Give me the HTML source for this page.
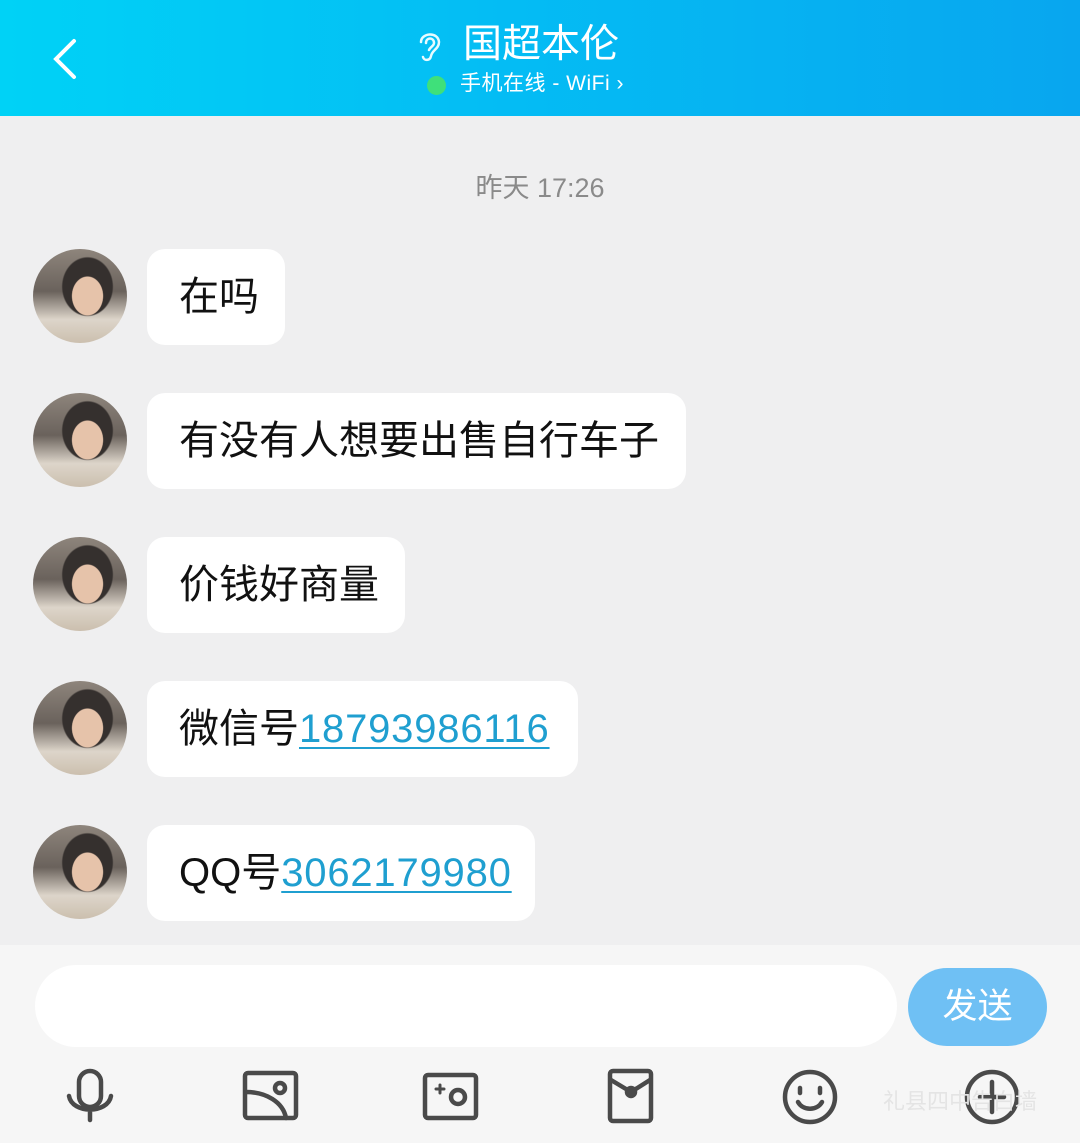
<!DOCTYPE html>
<html><head><meta charset="utf-8"><style>
*{margin:0;padding:0;box-sizing:border-box}
body{width:1080px;height:1143px;background:#efeff0;font-family:"Liberation Sans","Noto Sans CJK SC",sans-serif;position:relative;overflow:hidden}
.hdr{position:absolute;left:0;top:0;width:1080px;height:116px;background:linear-gradient(90deg,#00d2f6 0%,#04bdf4 45%,#08a6ef 100%)}
.title{position:absolute;left:463px;top:20px;font-size:39px;color:#fff;line-height:50px}
.sub{position:absolute;left:460px;top:70px;font-size:21px;color:#fff;line-height:28px;letter-spacing:0.5px}
.dot{position:absolute;left:427px;top:76px;width:19px;height:19px;border-radius:50%;background:#3fe07a}
.time{position:absolute;left:0;width:1080px;top:166px;text-align:center;font-size:27px;color:#8a8a8a}
.av{position:absolute;left:33px;width:94px;height:94px;border-radius:50%;background:radial-gradient(ellipse 16px 20px at 58% 50%,#e6c3aa 0 95%,transparent 100%),radial-gradient(ellipse 26px 30px at 58% 40%,#35302e 0 95%,transparent 100%),linear-gradient(180deg,#8e857c 0%,#6a625c 45%,#ddd5ca 75%,#cbbfae 100%)}
.b{position:absolute;left:147px;height:96px;background:#fff;border-radius:18px;font-size:40px;line-height:96px;padding-left:32px;color:#111;white-space:nowrap}
.b a{color:#1f9fd0;text-decoration:underline;text-decoration-thickness:2px;text-underline-offset:5px;letter-spacing:0.8px}
.bot{position:absolute;left:0;top:945px;width:1080px;height:198px;background:#f6f6f6}
.inp{position:absolute;left:35px;top:965px;width:862px;height:82px;background:#fff;border-radius:41px}
.send{position:absolute;left:908px;top:968px;width:139px;height:78px;background:#6fc0f4;border-radius:39px;color:#fff;font-size:35px;line-height:78px;text-align:center}
.wm{position:absolute;left:883px;top:1084px;font-size:22px;color:#e4e4e4}
</style></head><body>
<div class="hdr">
<svg style="position:absolute;left:50px;top:38px" width="30" height="42"><path d="M24 3 L6 21 L24 39" stroke="#fff" stroke-width="4" fill="none" stroke-linecap="round"/></svg>
<svg style="position:absolute;left:416px;top:28px" width="28" height="36"><path d="M5 14 C5 5 22 3 23 14 C23 21 16 22 15 28 C14 33 8 33 7 29 M10 15 C10 9 18 9 18 15 C18 18 14 19 13 22" stroke="#e8fbff" stroke-width="2.5" fill="none" stroke-linecap="round"/></svg>
<div class="title">国超本伦</div>
<div class="dot"></div>
<div class="sub">手机在线 - WiFi ›</div>
</div>
<div class="time">昨天 17:26</div>
<div class="av" style="top:249px"></div><div class="b" style="top:249px;width:138px">在吗</div>
<div class="av" style="top:393px"></div><div class="b" style="top:393px;width:539px">有没有人想要出售自行车子</div>
<div class="av" style="top:537px"></div><div class="b" style="top:537px;width:258px">价钱好商量</div>
<div class="av" style="top:681px"></div><div class="b" style="top:681px;width:431px">微信号<a>18793986116</a></div>
<div class="av" style="top:825px"></div><div class="b" style="top:825px;width:388px">QQ号<a>3062179980</a></div>
<div class="bot"></div>
<div class="inp"></div>
<div class="send">发送</div>
<svg style="position:absolute;left:0;top:1060px" width="1080" height="75" fill="none" stroke="#4a4a4a" stroke-width="4.5" stroke-linecap="round" stroke-linejoin="round">
<rect x="79" y="11" width="22" height="36" rx="11"/>
<path d="M69 36 C72 54 108 54 111 36 M90 50 V60"/>
<rect x="245" y="13" width="51" height="45" rx="3"/>
<path d="M246 32 C266 32 283 42 286 58"/><circle cx="280" cy="28" r="5"/>
<rect x="425" y="15" width="51" height="43" rx="3"/>
<circle cx="458" cy="37" r="7"/><path d="M436 29 h8 M440 25 v8" stroke-width="3"/>
<rect x="610" y="11" width="41" height="50" rx="3"/>
<path d="M611 20 L631 32 L650 20"/><circle cx="631" cy="32" r="4"/>
<circle cx="810" cy="37" r="25"/><path d="M800 28 v5 M820 28 v5 M798 42 C803 51 817 51 822 42"/>
<circle cx="992" cy="37" r="25"/><path d="M992 22 v30 M980 37 h24"/>
</svg>
<div class="wm">礼县四中告白墙</div>
</body></html>
